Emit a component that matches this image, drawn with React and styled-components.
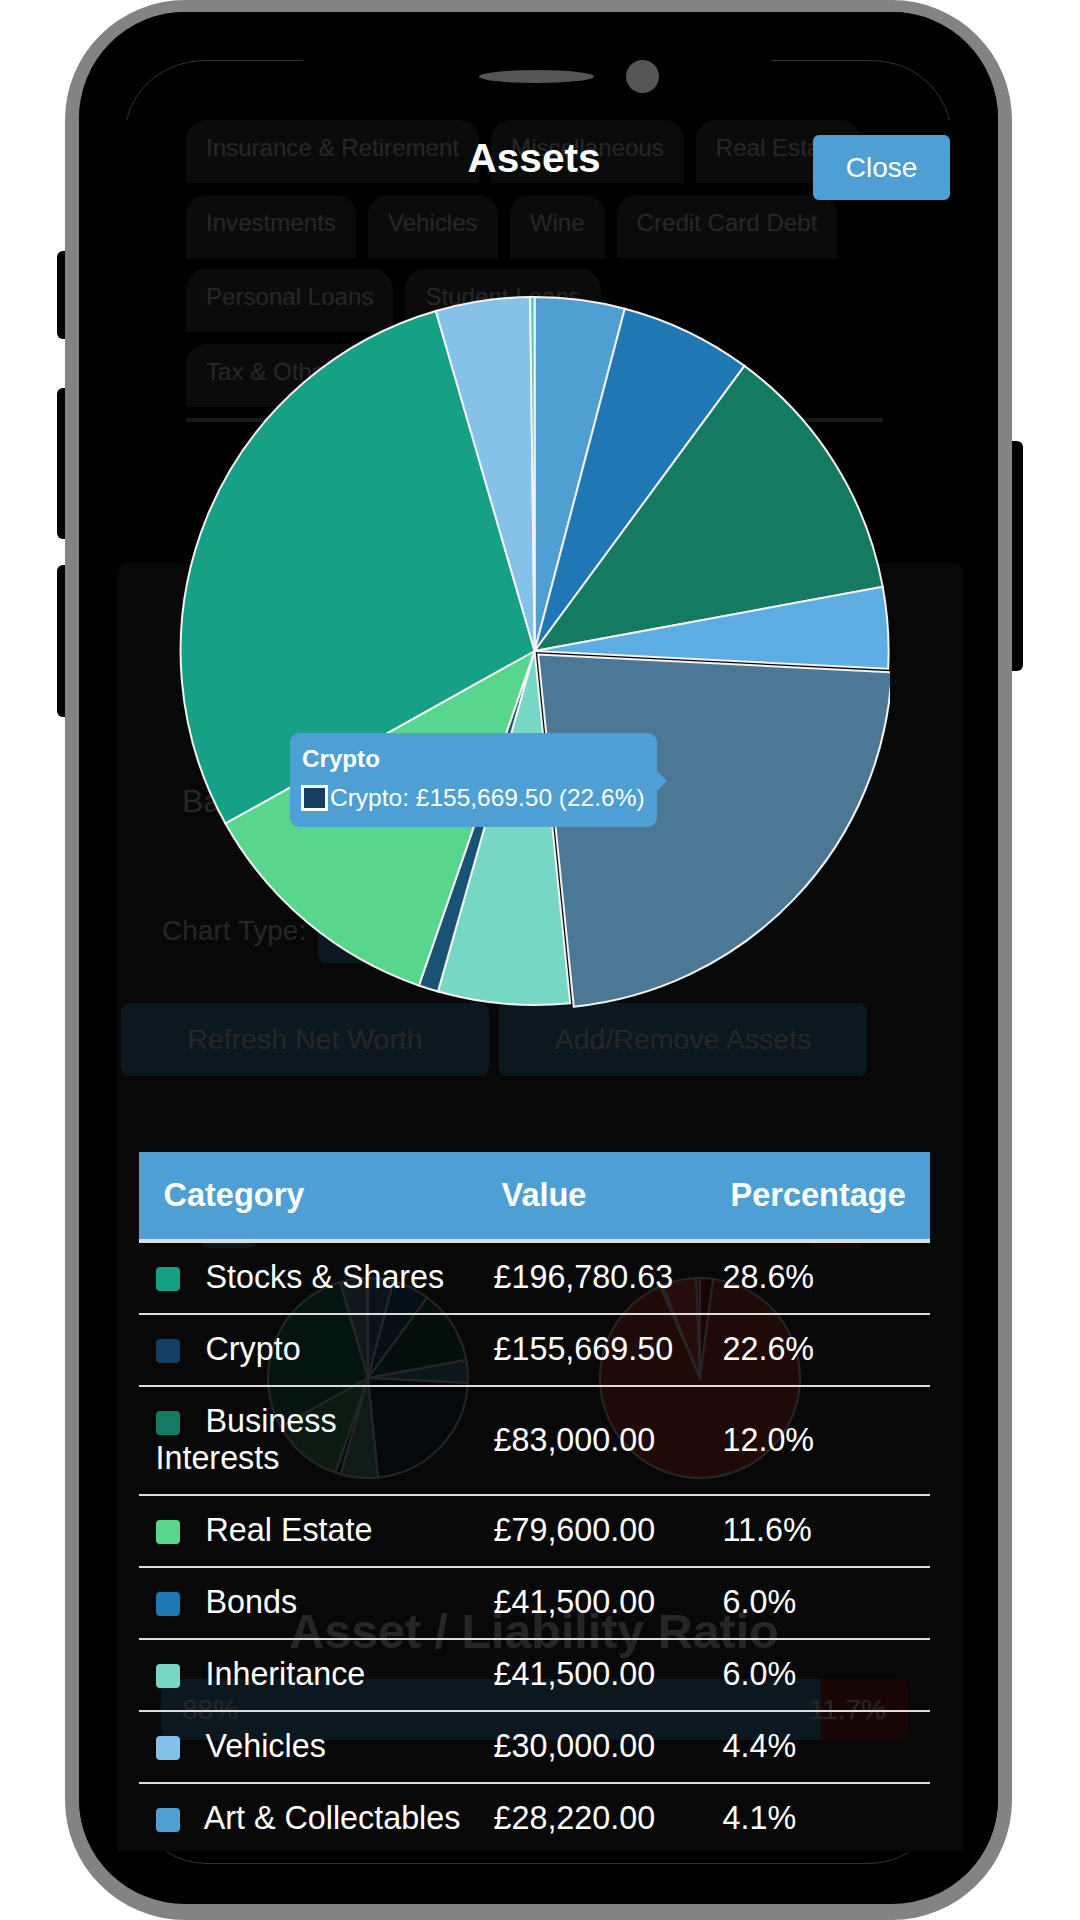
import React from "react";
import styled, { createGlobalStyle } from "styled-components";

const BLUE = "#4e9fd3";

const chips = [
  "Insurance & Retirement",
  "Miscellaneous",
  "Real Estate",
  "Investments",
  "Vehicles",
  "Wine",
  "Credit Card Debt",
  "Personal Loans",
  "Student Loans",
  "Tax & Other Liabilities",
];

// percentages run clockwise from twelve o'clock
const assetSlices = [
  { pct: 4.1, color: "#4f9fd3" },
  { pct: 6, color: "#1f77b4" },
  { pct: 12, color: "#157a62" },
  { pct: 3.7, color: "#5dade2" },
  { pct: 22.6, color: "#153f60", hover: "#4c7896" },
  { pct: 6, color: "#76d7c4" },
  { pct: 0.9, color: "#1a5276" },
  { pct: 11.6, color: "#58d68d" },
  { pct: 28.6, color: "#16a085" },
  { pct: 4.3, color: "#85c1e9" },
  { pct: 0.2, color: "#48c9b0" },
];

const liabilitySlices = [
  { pct: 2.1, color: "#aa1a1a" },
  { pct: 91.4, color: "#cc4235" },
  { pct: 0.4, color: "#cc4235" },
  { pct: 5.5, color: "#ff5a50" },
  { pct: 0.6, color: "#cc4235" },
];

const rows = [
  { name: "Stocks & Shares", value: "£196,780.63", pct: "28.6%", color: "#16a085" },
  { name: "Crypto", value: "£155,669.50", pct: "22.6%", color: "#153f60" },
  { name: "Business Interests", value: "£83,000.00", pct: "12.0%", color: "#157a62" },
  { name: "Real Estate", value: "£79,600.00", pct: "11.6%", color: "#58d68d" },
  { name: "Bonds", value: "£41,500.00", pct: "6.0%", color: "#1f77b4" },
  { name: "Inheritance", value: "£41,500.00", pct: "6.0%", color: "#76d7c4" },
  { name: "Vehicles", value: "£30,000.00", pct: "4.4%", color: "#85c1e9" },
  { name: "Art & Collectables", value: "£28,220.00", pct: "4.1%", color: "#4f9fd3" },
];

const polar = (cx, cy, r, pct) => {
  const a = (pct / 100) * Math.PI * 2;
  return [cx + r * Math.sin(a), cy - r * Math.cos(a)];
};

const Slices = ({ slices, cx, cy, r, stroke, strokeWidth, fillOpacity = 1, offset = 0 }) => {
  let start = 0;
  return slices.map((s, i) => {
    const end = start + s.pct;
    const mid = ((start + end) / 200) * Math.PI * 2;
    const dx = s.hover ? offset * Math.sin(mid) : 0;
    const dy = s.hover ? -offset * Math.cos(mid) : 0;
    const [x1, y1] = polar(cx + dx, cy + dy, r, start);
    const [x2, y2] = polar(cx + dx, cy + dy, r, end);
    const large = s.pct > 50 ? 1 : 0;
    start = end;
    return (
      <path
        key={i}
        d={`M${cx + dx} ${cy + dy}L${x1} ${y1}A${r} ${r} 0 ${large} 1 ${x2} ${y2}Z`}
        fill={offset && s.hover ? s.hover : s.color}
        fillOpacity={fillOpacity}
        stroke={stroke}
        strokeWidth={strokeWidth}
      />
    );
  });
};

const GlobalStyle = createGlobalStyle`
  html, body {
    margin: 0;
    background: #fff;
  }
  body {
    width: 1080px;
    height: 1920px;
    overflow: hidden;
    font-family: "Liberation Sans", Arial, sans-serif;
  }
`;

const Phone = styled.div`
  position: relative;
  box-sizing: border-box;
  width: 947px;
  height: 1920px;
  margin-left: 65px;
  border: 14px solid #838383;
  border-top-width: 12px;
  border-bottom-width: 16px;
  border-radius: 120px;
  background: #000;
`;

const SideButton = styled.div`
  position: absolute;
  top: ${(p) => p.top}px;
  height: ${(p) => p.height}px;
  ${(p) => (p.right ? "left: 933px;" : "left: -22px;")}
  width: ${(p) => (p.right ? 11 : 8)}px;
  background: #000;
  border-radius: ${(p) => (p.right ? "0 6px 6px 0" : "6px 0 0 6px")};
`;

const Screen = styled.div`
  position: relative;
  height: 100%;
  border-radius: 106px;
  overflow: hidden;
`;

const Viewport = styled.div`
  position: relative;
  box-sizing: border-box;
  height: 1839px;
  padding-top: 108px;
  overflow: hidden;
`;

const Chips = styled.div`
  display: flex;
  flex-wrap: wrap;
  gap: 11.6px 12px;
  width: 697px;
  margin-left: 107px;
`;

const Chip = styled.div`
  box-sizing: border-box;
  height: 63px;
  padding: 0 20px;
  background: #4a4a4a;
  border-radius: 20px 20px 0 0;
  color: #fff;
  font-size: 24.1px;
  line-height: 56px;
  white-space: nowrap;
`;

const Divider = styled.div`
  width: 697px;
  height: 4px;
  margin: 11.2px 0 0 107px;
  background: #aaa;
`;

const Panel = styled.div`
  box-sizing: border-box;
  width: 845px;
  height: 1288px;
  margin: 141px 0 0 39px;
  padding-top: 220px;
  background: #353535;
  border-radius: 10px 10px 0 0;
  overflow: hidden;
  color: #fff;
`;

const BaseRow = styled.div`
  height: 37px;
  padding-left: 64px;
  font-size: 32px;
  line-height: 37px;
`;

const ChartRow = styled.div`
  display: flex;
  align-items: center;
  gap: 12px;
  height: 64px;
  margin-top: 79px;
  padding-left: 44px;
  font-size: 28px;
`;

const Select = styled.div`
  width: 160px;
  height: 64px;
  background: ${BLUE};
  border-radius: 8px;
`;

const ButtonRow = styled.div`
  display: flex;
  gap: 10px;
  margin-top: 40px;
  padding-left: 3px;
`;

const ActionButton = styled.div`
  width: 368px;
  height: 73px;
  background: ${BLUE};
  border-radius: 8px;
  font-size: 28.5px;
  line-height: 73px;
  text-align: center;
`;

const PeekRow = styled.div`
  display: flex;
  justify-content: space-between;
  margin-top: 114px;
  padding: 0 95px 0 82px;
`;

const PeekButton = styled.div`
  width: 58px;
  height: 58px;
  background: ${(p) => p.color};
  border-radius: 10px;
`;

const MiniPies = styled.div`
  display: flex;
  gap: 128px;
  margin: 28px 0 0 148px;
`;

const SectionTitle = styled.div`
  margin-top: ${(p) => p.top}px;
  padding-right: 13px;
  font-size: ${(p) => p.size}px;
  font-weight: 700;
  line-height: 55px;
  text-align: center;
`;

const RatioBar = styled.div`
  display: flex;
  width: 747px;
  height: 61px;
  margin: 20px 0 0 43px;
  border-radius: 12px;
  overflow: hidden;
  font-size: 28px;
  line-height: 61px;
`;

const RatioPart = styled.div`
  display: flex;
  justify-content: ${(p) => (p.end ? "flex-end" : "flex-start")};
  box-sizing: border-box;
  width: ${(p) => p.width}px;
  padding: ${(p) => (p.end ? "0 22px 0 0" : "0 0 0 21px")};
  background: ${(p) => p.color};
  white-space: nowrap;
`;

const Modal = styled.div`
  position: absolute;
  inset: 0;
  background: rgba(0, 0, 0, 0.85);
`;

const ModalHeader = styled.div`
  display: flex;
  align-items: flex-start;
  padding: 123px 48px 0 176px;
`;

const ModalTitle = styled.div`
  flex: 1;
  color: #fff;
  font-size: 40.6px;
  font-weight: 700;
  line-height: 46px;
  text-align: center;
`;

const CloseButton = styled.div`
  width: 137px;
  height: 65px;
  background: ${BLUE};
  border-radius: 6px;
  color: #fff;
  font-size: 28px;
  line-height: 65px;
  text-align: center;
`;

const ChartBox = styled.div`
  position: relative;
  width: 714px;
  height: 720px;
  margin: 92px 0 0 97px;
`;

const ChartSvg = styled.svg`
  display: block;
  overflow: hidden;
`;

const Tooltip = styled.div`
  position: absolute;
  left: 114px;
  top: 441px;
  display: flex;
  flex-direction: column;
  gap: 8px;
  padding: 12px;
  background: ${BLUE};
  border-radius: 9px;
  color: #fff;
  white-space: nowrap;

  &::after {
    content: "";
    position: absolute;
    left: 100%;
    top: 38px;
    border: 10px solid transparent;
    border-left-color: ${BLUE};
    border-right-width: 0;
  }
`;

const TooltipTitle = styled.div`
  font-size: 24.2px;
  font-weight: 700;
  line-height: 28px;
`;

const TooltipRow = styled.div`
  display: flex;
  align-items: center;
  gap: 2px;
  margin-left: -1px;
  font-size: 24.5px;
  line-height: 34px;
`;

const TooltipSwatch = styled.span`
  box-sizing: border-box;
  width: 27px;
  height: 26px;
  background: #153f60;
  border: 3px solid #fff;
`;

const Table = styled.table`
  width: 791px;
  margin: 140px 0 0 60px;
  border-collapse: collapse;
  table-layout: fixed;
  color: #fff;
  font-size: 32.3px;
`;

const Th = styled.th`
  height: 87px;
  padding: 0 0 0 24.5px;
  background: ${BLUE};
  border-bottom: 4px solid #ddd;
  font-size: 32.5px;
  font-weight: 700;
  text-align: left;
`;

const Td = styled.td`
  padding: 16.4px 16.5px 16.6px;
  border-bottom: 2px solid #ddd;
  line-height: 37px;
`;

const Swatch = styled.span`
  display: inline-block;
  width: 24px;
  height: 24px;
  margin-right: 17px;
  background: ${(p) => p.color};
  border-radius: 4px;
  vertical-align: -3px;
`;

const Notch = styled.div`
  position: absolute;
  left: 400px;
  top: 48px;
  display: flex;
  align-items: center;
  gap: 32px;
`;

const Speaker = styled.div`
  width: 115px;
  height: 13px;
  background: #555;
  border-radius: 50%;
`;

const Camera = styled.div`
  width: 33px;
  height: 33px;
  background: #555;
  border-radius: 50%;
`;

const FrameLines = styled.svg`
  position: absolute;
  inset: 0;
  pointer-events: none;
`;

export default function App() {
  return (
    <>
      <GlobalStyle />
      <Phone>
        <SideButton top={239} height={88} />
        <SideButton top={376} height={151} />
        <SideButton top={553} height={152} />
        <SideButton right top={429} height={230} />
        <Screen>
          <Viewport>
            <Chips>
              {chips.map((c) => (
                <Chip key={c}>{c}</Chip>
              ))}
            </Chips>
            <Divider />
            <Panel>
              <BaseRow>Base Currency</BaseRow>
              <ChartRow>
                Chart Type:
                <Select />
              </ChartRow>
              <ButtonRow>
                <ActionButton>Refresh Net Worth</ActionButton>
                <ActionButton>Add/Remove Assets</ActionButton>
              </ButtonRow>
              <PeekRow>
                <PeekButton color={BLUE} />
                <PeekButton color="#a5302a" />
              </PeekRow>
              <MiniPies>
                <svg width="204" height="204">
                  <Slices slices={assetSlices} cx={102} cy={102} r={100} stroke="#fff" strokeWidth={2} fillOpacity={0.8} />
                </svg>
                <svg width="204" height="204">
                  <Slices slices={liabilitySlices} cx={102} cy={102} r={100} stroke="#fff" strokeWidth={2} />
                </svg>
              </MiniPies>
              <SectionTitle top={124} size={48.4}>Asset / Liability Ratio</SectionTitle>
              <RatioBar>
                <RatioPart width={660} color={BLUE}>88%</RatioPart>
                <RatioPart end width={87} color="#a5302a">11.7%</RatioPart>
              </RatioBar>
              <SectionTitle top={101} size={36}>Monthly Net Worth Trends</SectionTitle>
            </Panel>
            <Modal>
              <ModalHeader>
                <ModalTitle>Assets</ModalTitle>
                <CloseButton>Close</CloseButton>
              </ModalHeader>
              <ChartBox>
                <ChartSvg width="714" height="720">
                  <Slices
                    slices={assetSlices}
                    cx={358.6}
                    cy={359}
                    r={354}
                    stroke="#f2f2f2"
                    strokeWidth={2}
                    offset={5}
                  />
                </ChartSvg>
                <Tooltip>
                  <TooltipTitle>Crypto</TooltipTitle>
                  <TooltipRow>
                    <TooltipSwatch />
                    Crypto: £155,669.50 (22.6%)
                  </TooltipRow>
                </Tooltip>
              </ChartBox>
              <Table>
                <colgroup>
                  <col width="338" />
                  <col width="229" />
                  <col width="224" />
                </colgroup>
                <thead>
                  <tr>
                    <Th>Category</Th>
                    <Th>Value</Th>
                    <Th>Percentage</Th>
                  </tr>
                </thead>
                <tbody>
                  {rows.map((r) => (
                    <tr key={r.name}>
                      <Td>
                        <Swatch color={r.color} /> {r.name}
                      </Td>
                      <Td>{r.value}</Td>
                      <Td>{r.pct}</Td>
                    </tr>
                  ))}
                </tbody>
              </Table>
            </Modal>
          </Viewport>
          <FrameLines width="919" height="1892" fill="none" stroke="#333">
            <path d="M224 48.5H126A80 76 0 0 0 47.5 108" />
            <path d="M692 48.5H790A80 76 0 0 1 870.5 108" />
            <path d="M88 1840A70 60 0 0 0 128 1851.5H790A70 60 0 0 0 830 1840" />
          </FrameLines>
          <Notch>
            <Speaker />
            <Camera />
          </Notch>
        </Screen>
      </Phone>
    </>
  );
}
